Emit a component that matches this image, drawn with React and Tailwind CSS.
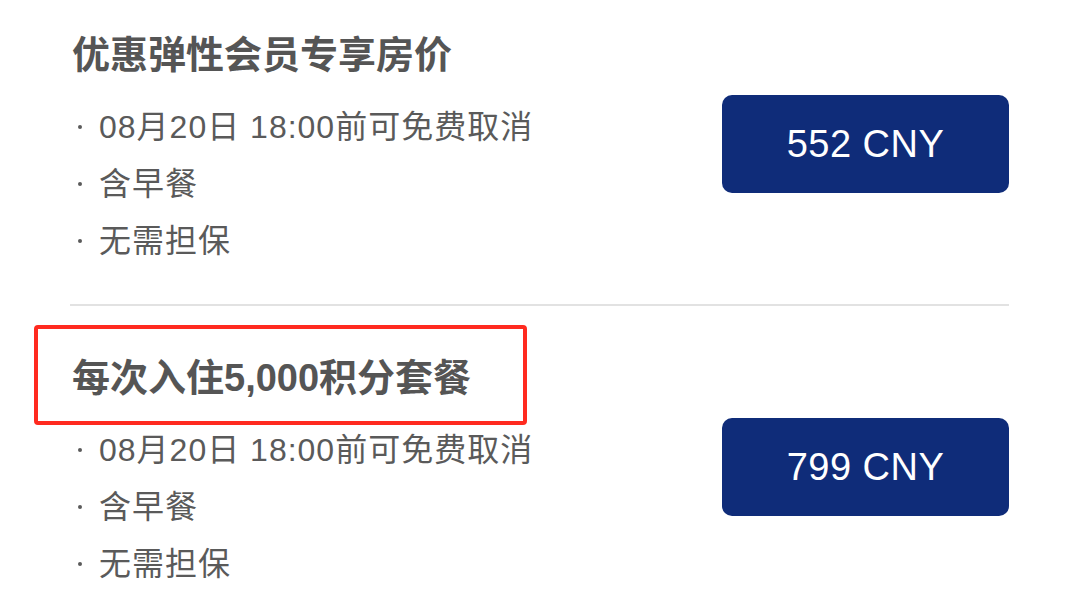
export default function App() {
  const font = { fontFamily: '"Liberation Sans", "Noto Sans CJK SC", sans-serif' };
  const items = ["08月20日 18:00前可免费取消", "含早餐", "无需担保"];
  const Section = ({ title, price, boxed }) => (
    <div>
      <div className="relative h-[50px] flex items-center">
        <div className="text-[38px] font-bold text-[#555555] leading-[50px]">{title}</div>
        {boxed && (
          <div className="absolute left-[-38px] top-[-28px] w-[493px] h-[100px] border-[4px] border-[#ff2a1f] rounded-[4px]" />
        )}
      </div>
      <div className="flex justify-between items-start">
        <ul className="pt-[18px]">
          {items.map((t) => (
            <li key={t} className="flex items-center h-[57px] text-[32px] text-[#5a5a5a] tracking-[1px]">
              <span className="ml-[6px] mr-[17px] w-[4px] h-[4px] rounded-full bg-[#5a5a5a]" />
              <span>{t}</span>
            </li>
          ))}
        </ul>
        <div className="mt-[15px] w-[287px] h-[98px] rounded-[10px] bg-[#0f2c79] flex items-center justify-center text-white text-[38px] tracking-[0.5px]">
          {price}
        </div>
      </div>
    </div>
  );
  return (
    <div className="w-[1080px] h-[610px] bg-white overflow-hidden pl-[72px] pr-[71px] pt-[30px]" style={font}>
      <Section title="优惠弹性会员专享房价" price="552 CNY" />
      <div className="mt-[35px] h-[2px] bg-[#e2e2e2] ml-[-2px]" />
      <div className="pt-[47px]">
        <Section title="每次入住5,000积分套餐" price="799 CNY" boxed />
      </div>
    </div>
  );
}
